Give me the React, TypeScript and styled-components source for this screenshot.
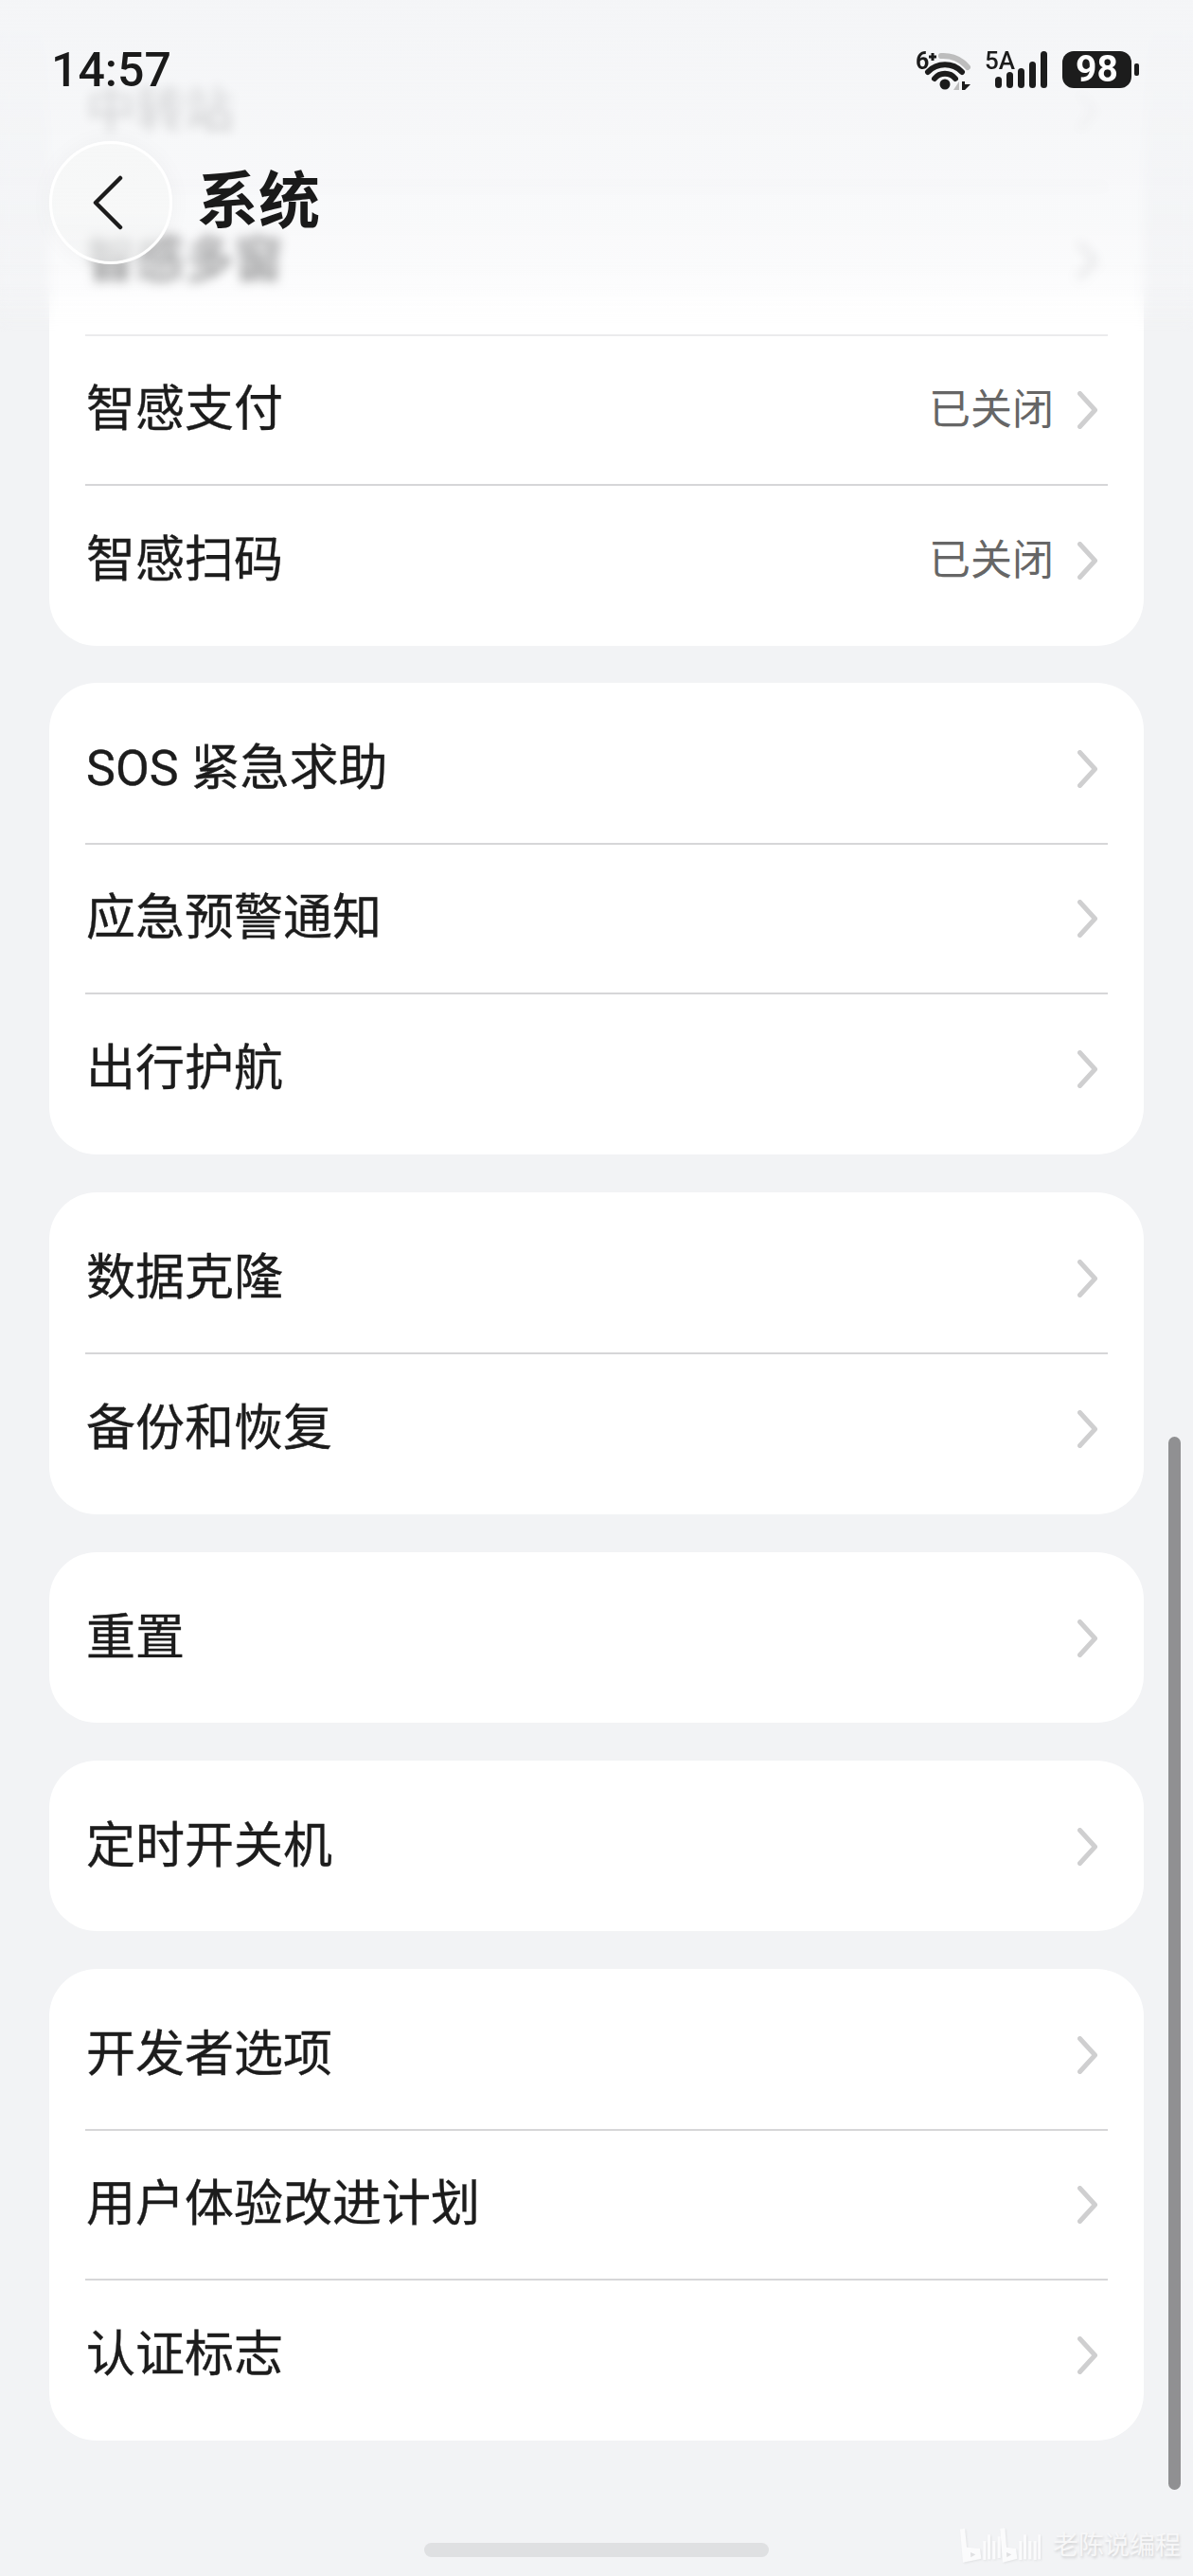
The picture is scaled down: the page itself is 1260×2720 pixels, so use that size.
import React from 'react';
import styled, { createGlobalStyle } from 'styled-components';

const GlobalStyle = createGlobalStyle`
  html, body {
    margin: 0;
    padding: 0;
    background: #f2f3f5;
  }
  * {
    box-sizing: border-box;
  }
`;

const FONT = `Roboto, "Noto Sans CJK SC", sans-serif`;

const Page = styled.div`
  position: relative;
  width: 1260px;
  height: 2720px;
  overflow: hidden;
  background: #f2f3f5;
  font-family: ${FONT};
  color: #1c1c1c;
`;

const List = styled.div`
  display: flex;
  flex-direction: column;
  gap: 40px;
  padding: 0 52px;
`;

const Card = styled.section`
  background: #fff;
  border-radius: 50px;
  padding: 13px 38px 11px;
`;

// the first card runs on above the top of the screen
const ScrolledCard = styled(Card)`
  border-radius: 0 0 50px 50px;
  padding-top: 39px;
  margin-bottom: -1px;
`;

const Row = styled.div<{ $faded?: boolean }>`
  display: flex;
  align-items: center;
  height: 158px;
  border-bottom: 2px solid ${(p) => (p.$faded ? '#ebebed' : '#d6d6d8')};

  &:last-child {
    border-bottom: 0;
  }

  &:only-child {
    height: 156px;
  }
`;

const Label = styled.span`
  flex: 1;
  padding-left: 1px;
  font-size: 52px;
  line-height: 60px;
  -webkit-text-stroke: 0.35px #1c1c1c;
`;

const Value = styled.span`
  font-size: 44px;
  line-height: 56px;
  color: #666;
  margin-right: 25px;
`;

const ChevronSvg = styled.svg`
  flex-shrink: 0;
  margin-right: 11px;
`;

const Header = styled.header`
  position: absolute;
  top: 0;
  left: 0;
  right: 0;
`;

const BlurLayer = styled.div`
  position: absolute;
  top: 0;
  left: 0;
  right: 0;
  height: 352px;
  backdrop-filter: blur(6px);
  background: linear-gradient(
    to bottom,
    rgba(244, 245, 247, 0.97) 0,
    rgba(244, 245, 247, 0.84) 115px,
    rgba(245, 246, 248, 0.52) 274px,
    rgba(250, 250, 251, 0.3) 330px
  );
  mask-image: linear-gradient(to bottom, #000 0, #000 300px, transparent 352px);
`;

const StatusBar = styled.div`
  position: relative;
  display: flex;
  align-items: center;
  justify-content: space-between;
  height: 149px;
  padding: 0 57px 2px 54px;
`;

const Clock = styled.span`
  font-size: 50px;
  font-weight: 500;
  line-height: 58px;
  color: #1a1a1a;
`;

const StatusIcons = styled.div`
  display: flex;
  align-items: center;
`;

const WifiIcon = styled.svg`
  margin: 0 14px 4px 0;
`;

const SignalIcon = styled.svg`
  margin: 0 16px 4px 0;
`;

const Battery = styled.div`
  display: flex;
  align-items: center;
  gap: 3px;
`;

const BatteryBody = styled.div`
  display: flex;
  align-items: center;
  justify-content: center;
  width: 73px;
  height: 39px;
  border-radius: 12px;
  background: #1c1c1c;
  color: #fff;
  font-size: 39px;
  font-weight: 700;
  line-height: 39px;
`;

const BatteryNub = styled.div`
  width: 5px;
  height: 13px;
  border-radius: 2px;
  background: #1c1c1c;
`;

const NavBar = styled.div`
  position: relative;
  display: flex;
  align-items: center;
  gap: 26px;
  padding-left: 52px;
`;

const BackButton = styled.button`
  display: flex;
  align-items: center;
  justify-content: center;
  width: 130px;
  height: 130px;
  padding: 0 7px 0 0;
  border: 3px solid #fff;
  border-radius: 50%;
  background: linear-gradient(
    to bottom,
    rgba(246, 247, 247, 0.95) 0,
    rgba(246, 247, 247, 0.88) 60%,
    rgba(240, 241, 241, 0.5) 100%
  );
  box-shadow: 0 0 24px rgba(0, 0, 0, 0.04);
`;

const Title = styled.h1`
  margin: 0 0 2px;
  font-size: 65px;
  font-weight: 700;
  line-height: 76px;
  color: #1a1a1a;
`;

const ScrollBar = styled.div`
  position: absolute;
  top: 1517px;
  left: 1234px;
  width: 13px;
  height: 1112px;
  border-radius: 7px;
  background: #909092;
`;

const HomeIndicator = styled.div`
  position: absolute;
  left: 448px;
  top: 2685px;
  width: 364px;
  height: 15px;
  border-radius: 8px;
  background: #dfe0e2;
`;

const Watermark = styled.div`
  position: absolute;
  left: 1013px;
  top: 2668px;
  display: flex;
  align-items: center;
  gap: 13px;
`;

const WatermarkText = styled.span`
  font-size: 27px;
  line-height: 40px;
  color: #f7f7f8;
  text-shadow: 1px 2px 3px rgba(0, 0, 0, 0.14);
`;

const LogoSvg = styled.svg`
  filter: drop-shadow(1px 1px 1px rgba(0, 0, 0, 0.07));
`;

const groups: { label: string; value?: string; faded?: boolean }[][] = [
  [
    { label: '中转站' },
    { label: '智感多窗', faded: true },
    { label: '智感支付', value: '已关闭' },
    { label: '智感扫码', value: '已关闭' },
  ],
  [{ label: 'SOS 紧急求助' }, { label: '应急预警通知' }, { label: '出行护航' }],
  [{ label: '数据克隆' }, { label: '备份和恢复' }],
  [{ label: '重置' }],
  [{ label: '定时开关机' }],
  [{ label: '开发者选项' }, { label: '用户体验改进计划' }, { label: '认证标志' }],
];

function Chevron() {
  return (
    <ChevronSvg width="21" height="40" viewBox="0 0 21 40" fill="none">
      <path d="M2.5 2.5 L18.5 20 L2.5 37.5" stroke="#cfcfd0" strokeWidth="5" strokeLinecap="round" strokeLinejoin="round" />
    </ChevronSvg>
  );
}

function Wifi() {
  return (
    <WifiIcon width="60" height="48" viewBox="0 -6 60 48" fill="none">
      <text x="1" y="19" fontFamily="Roboto, sans-serif" fontWeight="700" fontSize="25" fill="#1c1c1c">6</text>
      <path d="M15 6 H23 M19 2 V10" stroke="#1c1c1c" strokeWidth="3" />
      <path d="M28 5 A34 34 0 0 1 56 17" stroke="#bdbdbd" strokeWidth="6" strokeLinecap="round" />
      <path d="M14 22 A25 25 0 0 1 50 22" stroke="#1c1c1c" strokeWidth="6" strokeLinecap="round" />
      <path d="M21 29 A14 14 0 0 1 43 29" stroke="#1c1c1c" strokeWidth="6" strokeLinecap="round" />
      <circle cx="32" cy="35" r="5.5" fill="#1c1c1c" />
      <path d="M41 41 L47 32 V41 Z" fill="#bdbdbd" />
      <path d="M50 32 V41 H53 L59 35 H53 V32 Z" fill="#1c1c1c" />
    </WifiIcon>
  );
}

function Signal() {
  const bars = [
    { x: 11, h: 12 },
    { x: 23, h: 17 },
    { x: 35, h: 21 },
    { x: 47, h: 28 },
    { x: 59, h: 39 },
  ];
  return (
    <SignalIcon width="66" height="44" viewBox="0 -4 66 44">
      <text x="0" y="19" fontFamily="Roboto, sans-serif" fontWeight="500" fontSize="26" fill="#1c1c1c">5A</text>
      {bars.map((b) => (
        <rect key={b.x} x={b.x} y={39 - b.h} width="7" height={b.h} rx="3.5" fill="#1c1c1c" />
      ))}
    </SignalIcon>
  );
}

function BilibiliLogo() {
  const stems = [
    [76, 42, 60],
    [90, 22, 78],
    [106, 42, 58],
    [190, 42, 60],
    [204, 22, 78],
    [220, 42, 58],
    [236, 42, 60],
    [250, 22, 78],
    [122, 28, 68],
  ];
  return (
    <LogoSvg width="86" height="38" viewBox="0 0 258 114" fill="#fbfbfc">
      <path d="M3 5 L18 2 L24 62 L66 66 L70 98 L12 110 Z" />
      <path d="M36 78 L52 85 L37 94 Z" fill="#e0e0e2" />
      <path d="M130 3 L145 1 L150 62 L180 66 L184 98 L138 110 Z" />
      <path d="M150 78 L166 85 L151 94 Z" fill="#e0e0e2" />
      {stems.map(([x, y, h]) => (
        <rect key={x} x={x} y={y} width="9" height={h} />
      ))}
    </LogoSvg>
  );
}

export default function App() {
  return (
    <Page>
      <GlobalStyle />
      <List>
        {groups.map((rows, i) => {
          const Group = i === 0 ? ScrolledCard : Card;
          return (
            <Group key={rows[0].label}>
              {rows.map((row) => (
                <Row key={row.label} $faded={row.faded}>
                  <Label>{row.label}</Label>
                  {row.value && <Value>{row.value}</Value>}
                  <Chevron />
                </Row>
              ))}
            </Group>
          );
        })}
      </List>

      <Header>
        <BlurLayer />
        <StatusBar>
          <Clock>14:57</Clock>
          <StatusIcons>
            <Wifi />
            <Signal />
            <Battery>
              <BatteryBody>98</BatteryBody>
              <BatteryNub />
            </Battery>
          </StatusIcons>
        </StatusBar>
        <NavBar>
          <BackButton aria-label="返回">
            <svg width="34" height="58" viewBox="0 0 34 58" fill="none">
              <path d="M30 3 L4 29 L30 55" stroke="#1c1c1c" strokeWidth="4.5" strokeLinecap="round" strokeLinejoin="round" />
            </svg>
          </BackButton>
          <Title>系统</Title>
        </NavBar>
      </Header>

      <ScrollBar />
      <Watermark>
        <BilibiliLogo />
        <WatermarkText>老陈说编程</WatermarkText>
      </Watermark>
      <HomeIndicator />
    </Page>
  );
}
